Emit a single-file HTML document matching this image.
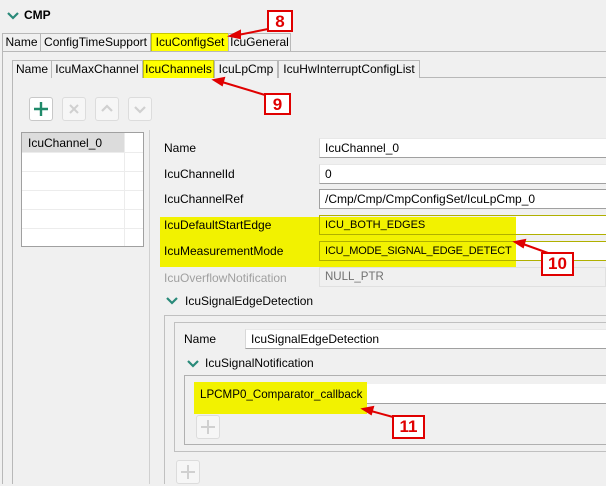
<!DOCTYPE html>
<html><head><style>
*{box-sizing:border-box;margin:0;padding:0}
body{width:606px;height:484px;overflow:hidden;background:#f0f0f0;font-family:"Liberation Sans",sans-serif;font-size:12px;color:#000;position:relative}
.a{position:absolute}
.tab{position:absolute;height:18px;border:1px solid #b8b8b8;border-bottom:none;background:#f0f0f0;line-height:16px;text-align:center;white-space:nowrap}
.y{background:#ffff00}
.fld{position:absolute;background:#fff;border-bottom:1px solid #a0a0a0;border-left:1px solid #d8d8d8;border-top:1px solid #e8e8e8;height:20px;line-height:18px;padding-left:5px;white-space:nowrap}
.lbl{position:absolute;white-space:nowrap}
.btn{position:absolute;width:24px;height:24px;border:1px solid #dcdcdc;border-radius:3px;background:#f6f6f6}
.rbox{position:absolute;border:2px solid #e00000;background:#fff;color:#e00000;font-weight:bold;font-size:17px;text-align:center;line-height:19px}
</style></head><body>
<svg class="a" style="left:7px;top:11px" width="12" height="9"><path d="M1 2 L6 7 L11 2" stroke="#2a8a7a" stroke-width="2.2" fill="none"/></svg>
<div class="lbl" style="left:24px;top:8px;font-weight:bold">CMP</div>

<div class="a" style="left:2px;top:51px;width:604px;height:433px;border:1px solid #b8b8b8;border-right:none;border-bottom:none"></div>
<div class="tab" style="left:2px;top:33px;width:39px">Name</div>
<div class="tab" style="left:40px;top:33px;width:111px">ConfigTimeSupport</div>
<div class="tab y" style="left:151px;top:33px;width:78px;border-color:#c8c800">IcuConfigSet</div>
<div class="tab" style="left:228px;top:33px;width:63px">IcuGeneral</div>

<div class="a" style="left:12px;top:77px;width:594px;height:407px;border:1px solid #b8b8b8;border-right:none;border-bottom:none"></div>
<div class="tab" style="left:12px;top:60px;width:40px">Name</div>
<div class="tab" style="left:51px;top:60px;width:92px">IcuMaxChannel</div>
<div class="tab y" style="left:143px;top:60px;width:71px;border-color:#c8c800">IcuChannels</div>
<div class="tab" style="left:214px;top:60px;width:64px">IcuLpCmp</div>
<div class="tab" style="left:278px;top:60px;width:142px">IcuHwInterruptConfigList</div>

<div class="btn" style="left:29px;top:97px;background:#fff;border-color:#c8c8c8"><svg width="22" height="22"><path d="M11 4V18M4 11H18" stroke="#1f8a6a" stroke-width="2.4"/></svg></div>
<div class="btn" style="left:62px;top:97px"><svg width="22" height="22"><path d="M7 7L15 15M15 7L7 15" stroke="#d0d0d0" stroke-width="2"/></svg></div>
<div class="btn" style="left:95px;top:97px"><svg width="22" height="22"><path d="M6 13L11 8L16 13" stroke="#d0d0d0" stroke-width="2.2" fill="none"/></svg></div>
<div class="btn" style="left:128px;top:97px"><svg width="22" height="22"><path d="M6 9L11 14L16 9" stroke="#d0d0d0" stroke-width="2.2" fill="none"/></svg></div>

<div class="a" style="left:21px;top:132px;width:123px;height:115px;border:1px solid #a0a0a0;background:#fff"></div>
<div class="a" style="left:22px;top:133px;width:102px;height:19px;background:#dcdcdc"></div>
<div class="lbl" style="left:28px;top:136px">IcuChannel_0</div>
<div class="a" style="left:124px;top:133px;width:1px;height:113px;background:#ececec"></div>
<div class="a" style="left:22px;top:152px;width:121px;height:1px;background:#ececec"></div>
<div class="a" style="left:22px;top:171px;width:121px;height:1px;background:#ececec"></div>
<div class="a" style="left:22px;top:190px;width:121px;height:1px;background:#ececec"></div>
<div class="a" style="left:22px;top:209px;width:121px;height:1px;background:#ececec"></div>
<div class="a" style="left:22px;top:228px;width:121px;height:1px;background:#ececec"></div>
<div class="a" style="left:149px;top:130px;width:1px;height:354px;background:#d0d0d0"></div>

<div class="a y" style="left:160px;top:217px;width:356px;height:50px;background:#f2f200"></div>
<div class="lbl" style="left:164px;top:141px">Name</div>
<div class="lbl" style="left:164px;top:167px">IcuChannelId</div>
<div class="lbl" style="left:164px;top:192px">IcuChannelRef</div>
<div class="lbl" style="left:164px;top:218px">IcuDefaultStartEdge</div>
<div class="lbl" style="left:164px;top:244px">IcuMeasurementMode</div>
<div class="lbl" style="left:164px;top:271px;color:#a0a0a0">IcuOverflowNotification</div>
<div class="fld" style="left:319px;top:138px;width:287px">IcuChannel_0</div>
<div class="fld" style="left:319px;top:164px;width:287px">0</div>
<div class="fld" style="left:319px;top:189px;width:287px;border:1px solid #a0a0a0;border-right:none">/Cmp/Cmp/CmpConfigSet/IcuLpCmp_0</div>
<div class="fld" style="left:319px;top:215px;width:287px;background:transparent;border:1px solid #b0b000;border-right:none;font-size:11px"><span style="position:absolute;left:196px;top:0;width:92px;height:18px;background:#fff"></span>ICU_BOTH_EDGES</div>
<div class="fld" style="left:319px;top:241px;width:287px;background:transparent;border:1px solid #b0b000;border-right:none;font-size:11px;letter-spacing:-0.2px"><span style="position:absolute;left:196px;top:0;width:92px;height:18px;background:#fff"></span>ICU_MODE_SIGNAL_EDGE_DETECT</div>
<div class="fld" style="left:319px;top:267px;width:287px;background:#f0f0f0;border:1px solid #e0e0e0;color:#707070;font-size:11.5px">NULL_PTR</div>

<svg class="a" style="left:166px;top:296px" width="12" height="9"><path d="M1 2 L6 7 L11 2" stroke="#2a8a7a" stroke-width="2.2" fill="none"/></svg>
<div class="lbl" style="left:185px;top:294px">IcuSignalEdgeDetection</div>
<div class="a" style="left:164px;top:315px;width:442px;height:169px;border:1px solid #c0c0c0;border-right:none;border-bottom:none"></div>
<div class="a" style="left:174px;top:322px;width:432px;height:130px;border:1px solid #c0c0c0;border-right:none"></div>
<div class="lbl" style="left:184px;top:332px">Name</div>
<div class="fld" style="left:245px;top:329px;width:361px">IcuSignalEdgeDetection</div>
<svg class="a" style="left:187px;top:359px" width="12" height="9"><path d="M1 2 L6 7 L11 2" stroke="#2a8a7a" stroke-width="2.2" fill="none"/></svg>
<div class="lbl" style="left:205px;top:356px">IcuSignalNotification</div>
<div class="a" style="left:184px;top:375px;width:422px;height:70px;border:1px solid #b0b0b0;border-right:none"></div>
<div class="fld" style="left:195px;top:384px;width:411px;border:none;border-bottom:1px solid #a0a0a0"></div>
<div class="a" style="left:194px;top:382px;width:173px;height:32px;background:#f2f200"></div>
<div class="lbl" style="left:200px;top:388px;font-size:11.6px">LPCMP0_Comparator_callback</div>
<div class="btn" style="left:196px;top:415px"><svg width="22" height="22"><path d="M11 4V18M4 11H18" stroke="#d0d0d0" stroke-width="2"/></svg></div>
<div class="btn" style="left:176px;top:460px"><svg width="22" height="22"><path d="M11 4V18M4 11H18" stroke="#d0d0d0" stroke-width="2"/></svg></div>

<svg class="a" style="left:0;top:0" width="606" height="484">
<g stroke="#e00000" stroke-width="2" fill="#e00000">
<line x1="268" y1="29" x2="238" y2="35"/><path d="M230 36 L240 31 L240 38Z"/>
<line x1="265" y1="95" x2="222" y2="82"/><path d="M214 80 L224 78 L222 85Z"/>
<line x1="548" y1="253" x2="523" y2="244"/><path d="M515 242 L525 240 L523 247Z"/>
<line x1="393" y1="417" x2="371" y2="411"/><path d="M363 409 L373 407 L371 414Z"/>
</g></svg>
<div class="rbox" style="left:267px;top:10px;width:26px;height:22px">8</div>
<div class="rbox" style="left:264px;top:93px;width:27px;height:22px">9</div>
<div class="rbox" style="left:541px;top:252px;width:33px;height:24px">10</div>
<div class="rbox" style="left:392px;top:415px;width:33px;height:24px">11</div>
</body></html>
